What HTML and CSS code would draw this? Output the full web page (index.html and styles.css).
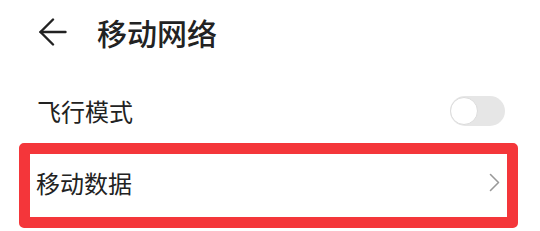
FILE: index.html
```html
<!DOCTYPE html>
<html lang="zh">
<head>
<meta charset="utf-8">
<link rel="stylesheet" href="styles.css">
</head>
<body>
<div class="page">
  <header class="header">
    <svg class="back" width="28" height="28" viewBox="0 0 28 28" fill="none" stroke="#222" stroke-width="2.4" stroke-linecap="round" stroke-linejoin="round">
      <path d="M1.5 14 H26.5"/>
      <path d="M14 1.5 L1.5 14 L14 26.5"/>
    </svg>
    <h1 class="title">移动网络</h1>
  </header>
  <div class="row">
    <span class="label">飞行模式</span>
    <span class="switch"><span class="knob"></span></span>
  </div>
  <div class="highlight">
    <div class="row row-inner">
      <span class="label">移动数据</span>
      <svg class="chev" width="11" height="19" viewBox="0 0 11 19" fill="none" stroke="#999" stroke-width="1.6" stroke-linecap="round" stroke-linejoin="round">
        <path d="M1.5 1.5 L9.5 9.5 L1.5 17.5"/>
      </svg>
    </div>
  </div>
</div>
</body>
</html>
```
FILE: styles.css
```css
html, body {
  margin: 0;
  padding: 0;
  background: #ffffff;
}
.page {
  width: 540px;
  height: 231px;
  overflow: hidden;
  font-family: "Noto Sans CJK SC", "Noto Sans", sans-serif;
  color: #222222;
}
.header {
  display: flex;
  align-items: center;
  height: 64px;
  padding-left: 39px;
  gap: 30px;
}
.back {
  display: block;
  flex: none;
}
.title {
  margin: 0;
  font-size: 30px;
  font-weight: 500;
  line-height: 1;
}
.row {
  display: flex;
  align-items: center;
  justify-content: space-between;
  height: 62px;
  margin-top: 16px;
  padding: 0 35px 0 37px;
}
.label {
  font-size: 24px;
  line-height: 1;
  font-weight: 400;
}
.switch {
  position: relative;
  width: 55px;
  height: 30px;
  border-radius: 15px;
  background: #e6e6e6;
}
.knob {
  position: absolute;
  left: 0;
  top: 1px;
  width: 26px;
  height: 26px;
  border-radius: 50%;
  background: #ffffff;
  border: 1.5px solid #dcdcdc;
}
.highlight {
  margin: 1px 22px 0 19px;
  height: 63px;
  border: 11px solid #f4363a;
  border-radius: 5px;
}
.row-inner {
  margin-top: 0;
  height: 57px;
  padding: 0 7px 6px 6px;
}
.chev {
  display: block;
}
```
